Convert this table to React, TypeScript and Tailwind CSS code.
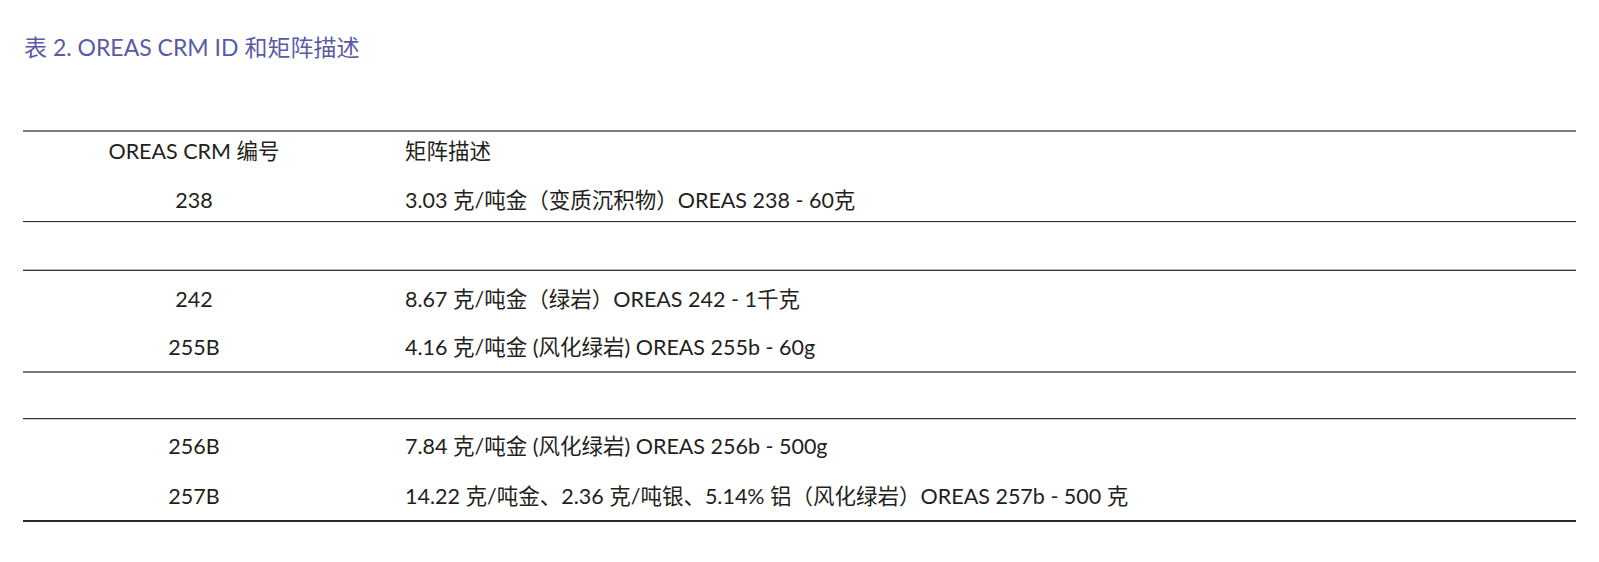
import React from 'react';

const rowsA = [
  { id: 'OREAS CRM 编号', desc: '矩阵描述' },
  { id: '238', desc: '3.03 克/吨金（变质沉积物）OREAS 238 - 60克' },
];

const rowsB = [
  { id: '242', desc: '8.67 克/吨金（绿岩）OREAS 242 - 1千克' },
  { id: '255B', desc: '4.16 克/吨金 (风化绿岩) OREAS 255b - 60g' },
];

const rowsC = [
  { id: '256B', desc: '7.84 克/吨金 (风化绿岩) OREAS 256b - 500g' },
  { id: '257B', desc: '14.22 克/吨金、2.36 克/吨银、5.14% 铝（风化绿岩）OREAS 257b - 500 克' },
];

const Row = ({ id, desc }: { id: string; desc: string }) => (
  <div className="flex h-[28px] items-center">
    <div className="w-[342px] text-center">{id}</div>
    <div className="pl-[40px]">{desc}</div>
  </div>
);

const App = () => {
  return (
    <div
      className="w-[1599px] h-[562px] bg-white text-[#231f20] text-[21.5px] leading-[28px]"
      style={{ fontFamily: 'Lato, "Noto Sans CJK SC", sans-serif' }}
    >
      <div className="pt-[33px] pl-[24px] text-[23px] text-[#5b5aa6]">表 2. OREAS CRM ID 和矩阵描述</div>

      <div className="mt-[69px] mx-[23px]">
        <div className="h-[2px] bg-[#7d7d7d]" />
        <div className="h-[89px] flex flex-col gap-[21px] pt-[5px]">
          {rowsA.map(r => (
            <Row key={r.id} {...r} />
          ))}
        </div>
        <div className="h-[1px] bg-[#2e2e2e]" />
        <div className="h-[1px] bg-[#e6e6e6]" />
        <div className="h-[46px]" />
        <div className="h-[1px] bg-[#b5b5b5]" />
        <div className="h-[1px] bg-[#3a3a3a]" />
        <div className="h-[100px] flex flex-col gap-[20px] pt-[14px]">
          {rowsB.map(r => (
            <Row key={r.id} {...r} />
          ))}
        </div>
        <div className="h-[2px] bg-[#7a7a7a]" />
        <div className="h-[45px]" />
        <div className="h-[1px] bg-[#333333]" />
        <div className="h-[1px] bg-[#d0d0d0]" />
        <div className="h-[100px] flex flex-col gap-[22px] pt-[12px]">
          {rowsC.map(r => (
            <Row key={r.id} {...r} />
          ))}
        </div>
        <div className="h-[2px] bg-[#2a2a2a]" />
      </div>
    </div>
  );
};

export default App;
